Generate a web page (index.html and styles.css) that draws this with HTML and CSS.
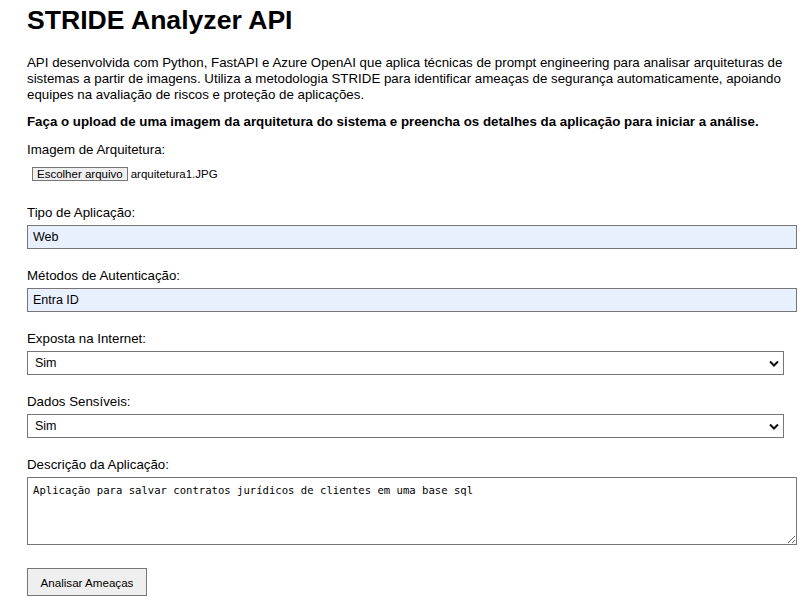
FILE: index.html
```html
<!DOCTYPE html>
<html lang="pt-BR">
<head>
<meta charset="utf-8">
<title>STRIDE Analyzer API</title>
<link rel="stylesheet" href="styles.css">
</head>
<body>
<main class="page">
  <h1 class="title">STRIDE Analyzer API</h1>
  <p class="intro">API desenvolvida com Python, FastAPI e Azure OpenAI que aplica técnicas de prompt engineering para analisar arquiteturas de sistemas a partir de imagens. Utiliza a metodologia STRIDE para identificar ameaças de segurança automaticamente, apoiando equipes na avaliação de riscos e proteção de aplicações.</p>
  <p class="lead">Faça o upload de uma imagem da arquitetura do sistema e preencha os detalhes da aplicação para iniciar a análise.</p>
  <form class="form">
    <div class="field">
      <label class="label">Imagem de Arquitetura:</label>
      <div class="file">
        <span class="file-btn">Escolher arquivo</span>
        <span class="file-name">arquitetura1.JPG</span>
      </div>
    </div>
    <div class="field">
      <label class="label" for="tipo">Tipo de Aplicação:</label>
      <input class="text-input" id="tipo" type="text" value="Web">
    </div>
    <div class="field">
      <label class="label" for="auth">Métodos de Autenticação:</label>
      <input class="text-input" id="auth" type="text" value="Entra ID">
    </div>
    <div class="field">
      <label class="label" for="exposta">Exposta na Internet:</label>
      <div class="select-wrap">
        <select class="select" id="exposta"><option>Sim</option><option>Não</option></select>
        <svg class="chevron" width="10" height="7" viewBox="0 0 10 7"><polyline points="1,1.5 5,5.5 9,1.5" fill="none" stroke="#111" stroke-width="2"/></svg>
      </div>
    </div>
    <div class="field">
      <label class="label" for="dados">Dados Sensíveis:</label>
      <div class="select-wrap">
        <select class="select" id="dados"><option>Sim</option><option>Não</option></select>
        <svg class="chevron" width="10" height="7" viewBox="0 0 10 7"><polyline points="1,1.5 5,5.5 9,1.5" fill="none" stroke="#111" stroke-width="2"/></svg>
      </div>
    </div>
    <div class="field">
      <label class="label" for="desc">Descrição da Aplicação:</label>
      <textarea class="textarea" id="desc" spellcheck="false">Aplicação para salvar contratos jurídicos de clientes em uma base sql</textarea>
    </div>
    <button class="submit" type="button">Analisar Ameaças</button>
  </form>
</main>
</body>
</html>
```

FILE: styles.css
```css
* { box-sizing: border-box; }

html, body {
  margin: 0;
  padding: 0;
  background: #fff;
}

body {
  font-family: "Liberation Sans", Arial, sans-serif;
  color: #000;
}

.page {
  width: 797px;
  padding: 5px 0 0 27px;
}

.title {
  margin: 0 0 20px;
  font-size: 26.6px;
  line-height: 30px;
  font-weight: bold;
}

.intro {
  margin: 0 0 11px;
  font-size: 13.3px;
  line-height: 16px;
}

.lead {
  margin: 0 0 12px;
  font-size: 13.3px;
  line-height: 16px;
  font-weight: bold;
}

.form {
  display: flex;
  flex-direction: column;
  align-items: flex-start;
}

.field {
  display: flex;
  flex-direction: column;
  width: 100%;
  margin-bottom: 19px;
}

.label {
  font-size: 13.3px;
  line-height: 16px;
  margin-bottom: 4px;
}

.file {
  display: flex;
  align-items: center;
  height: 24px;
  padding: 0 5px;
  gap: 3px;
}

.file-btn {
  display: inline-flex;
  align-items: center;
  height: 14px;
  padding: 0 4px;
  background: #efefef;
  border: 1px solid #767676;
  font-size: 11.5px;
  line-height: 12px;
}

.file-name {
  font-size: 11.5px;
}

.text-input {
  width: 770px;
  height: 24px;
  margin: 0;
  padding: 0 5px;
  border: 1px solid #767676;
  border-radius: 0;
  background: #e8f0fe;
  font-family: "Liberation Sans", Arial, sans-serif;
  font-size: 12.5px;
  color: #000;
}

.select-wrap {
  position: relative;
  width: 757px;
  height: 24px;
}

.select {
  appearance: none;
  -webkit-appearance: none;
  width: 100%;
  height: 24px;
  margin: 0;
  padding: 0 7px;
  border: 1px solid #767676;
  border-radius: 0;
  background: #fff;
  font-family: "Liberation Sans", Arial, sans-serif;
  font-size: 12.5px;
  color: #000;
}

.chevron {
  position: absolute;
  right: 5px;
  top: 9px;
  pointer-events: none;
}

.textarea {
  display: block;
  width: 770px;
  height: 68px;
  margin: 0;
  padding: 4px 5px;
  border: 1px solid #767676;
  border-radius: 0;
  font-family: "DejaVu Sans Mono", "Liberation Mono", monospace;
  font-size: 10.6px;
  line-height: 16px;
  color: #000;
  resize: both;
}

.submit {
  margin-top: 4px;
  width: 120px;
  height: 28px;
  padding: 0;
  background: #efefef;
  border: 1px solid #767676;
  border-radius: 0;
  font-family: "Liberation Sans", Arial, sans-serif;
  font-size: 11.6px;
  color: #000;
}
```
